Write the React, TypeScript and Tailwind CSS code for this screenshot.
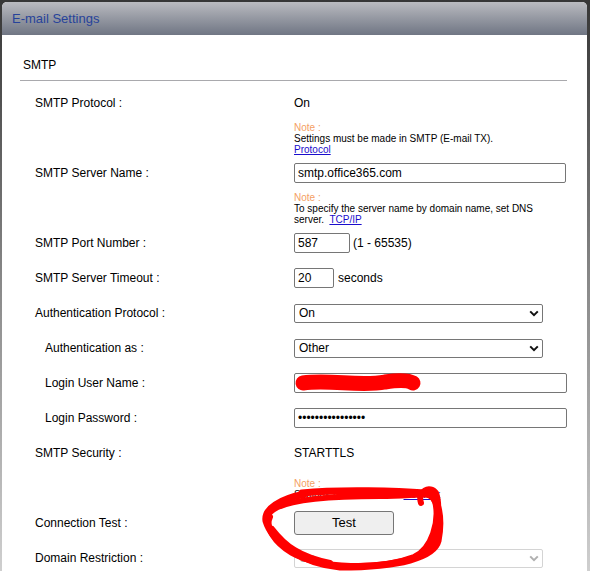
import React from "react";

const font = "font-['Liberation_Sans',Arial,Helvetica,sans-serif]";

function Chevron({ muted }: { muted?: boolean }) {
    return (
        <svg width="10" height="7" viewBox="0 0 10 7" className="shrink-0">
            <path
                d="M1.2 1.4 L5 5.2 L8.8 1.4"
                fill="none"
                stroke={muted ? "#b0b0b0" : "#111"}
                strokeWidth="2"
            />
        </svg>
    );
}

function Select({ value, disabled }: { value: string; disabled?: boolean }) {
    return (
        <div
            className={`flex h-[19px] w-[249px] items-center justify-between rounded-[2px] border pl-[4px] pr-[3px] text-[12px] ${
                disabled ? "border-[#d4d4d4] text-[#a8a8a8]" : "border-[#767676] text-black"
            }`}
        >
            <span>{value}</span>
            <Chevron muted={disabled} />
        </div>
    );
}

function TextBox({ value, width, password }: { value: string; width: string; password?: boolean }) {
    return (
        <input
            readOnly
            type={password ? "password" : "text"}
            value={value}
            className={`${width} h-[20px] rounded-[2px] border border-[#767676] bg-white pl-[3px] text-[12px] text-black outline-none`}
        />
    );
}

function Row({
    label,
    indent,
    className,
    children,
}: {
    label: string;
    indent?: boolean;
    className: string;
    children: React.ReactNode;
}) {
    return (
        <div className={`flex items-center ${className}`}>
            <div className={`w-[259px] shrink-0 text-[12px] text-black ${indent ? "pl-[10px]" : ""}`}>{label}</div>
            <div className="flex items-center">{children}</div>
        </div>
    );
}

function Note({ className, children }: { className: string; children: React.ReactNode }) {
    return (
        <div className={`ml-[259px] text-[10px] leading-[11px] text-black ${className}`}>
            <div className="text-[#f4a064]">Note :</div>
            {children}
        </div>
    );
}

export default function App() {
    return (
        <div className={`h-[571px] overflow-hidden bg-gradient-to-b from-[#363636] via-[#8a8a8a] to-[#cfcfcf] pl-[2px] pr-[3px] pt-[2px] ${font}`}>
            <div className="h-full overflow-hidden rounded-t-[5px] bg-white">
                {/* Header */}
                <div className="flex h-[33px] items-center bg-gradient-to-b from-[#babbc0] to-[#707684] pl-[10px] text-[13px] text-[#27439a]">
                    E-mail Settings
                </div>

                {/* Content */}
                <div className="pl-[33px]">
                    <div className="ml-[-12px] mt-[20px] text-[12px] leading-[20px] text-black">SMTP</div>
                    <div className="ml-[-15px] mt-[5px] h-px w-[547px] bg-[#a9a9ad]" />

                    <Row label="SMTP Protocol :" className="mt-[12px] h-[20px]">
                        <span className="text-[12px] text-black">On</span>
                    </Row>
                    <Note className="mt-[9px]">
                        <div>Settings must be made in SMTP (E-mail TX).</div>
                        <div>
                            <span className="text-[#1a0dcc] underline">Protocol</span>
                        </div>
                    </Note>

                    <Row label="SMTP Server Name :" className="mt-[8px] h-[20px]">
                        <TextBox value="smtp.office365.com" width="w-[272px]" />
                    </Row>
                    <Note className="mt-[9px]">
                        <div>To specify the server name by domain name, set DNS</div>
                        <div>
                            server.&nbsp; <span className="text-[#1a0dcc] underline">TCP/IP</span>
                        </div>
                    </Note>

                    <Row label="SMTP Port Number :" className="mt-[8px] h-[20px]">
                        <TextBox value="587" width="w-[56px]" />
                        <span className="ml-[3px] text-[12px] text-black">(1 - 65535)</span>
                    </Row>

                    <Row label="SMTP Server Timeout :" className="mt-[15px] h-[20px]">
                        <TextBox value="20" width="w-[40px]" />
                        <span className="ml-[4px] text-[12px] text-black">seconds</span>
                    </Row>

                    <Row label="Authentication Protocol :" className="mt-[15px] h-[20px]">
                        <Select value="On" />
                    </Row>

                    <Row label="Authentication as :" indent className="mt-[15px] h-[20px]">
                        <Select value="Other" />
                    </Row>

                    <Row label="Login User Name :" indent className="mt-[15px] h-[20px]">
                        <TextBox value="" width="w-[273px]" />
                    </Row>

                    <Row label="Login Password :" indent className="mt-[15px] h-[20px]">
                        <TextBox value="abcdefghijklmnop" width="w-[273px]" password />
                    </Row>

                    <Row label="SMTP Security :" className="mt-[15px] h-[20px]">
                        <span className="text-[12px] text-black">STARTTLS</span>
                    </Row>
                    <Note className="mt-[15px]">
                        <div>
                            Settings must be saved.{" "}
                            <span className="text-[#1a0dcc] underline">Network</span>
                        </div>
                    </Note>

                    <Row label="Connection Test :" className="mt-[11px] h-[24px]">
                        <button className="h-[24px] w-[100px] rounded-[3px] border border-[#767676] bg-[#efefef] text-[13px] text-black">
                            Test
                        </button>
                    </Row>

                    <Row label="Domain Restriction :" className="mt-[13px] h-[20px]">
                        <Select value="On" disabled />
                    </Row>
                </div>
            </div>

            {/* Red ink marks drawn over the screenshot */}
            <svg
                className="pointer-events-none absolute left-0 top-0"
                width="590"
                height="571"
                viewBox="0 0 590 571"
            >
                <g fill="none" stroke="#ff0000" strokeLinecap="round" strokeLinejoin="round">
                    <path
                        d="M303 383 C330 379, 360 387, 385 382 C398 380, 408 380, 413 383"
                        strokeWidth="15"
                    />
                    <path
                        d="M302 493 C340 489, 400 491, 425 493 C440 495, 442 521, 438 541 C434 557, 400 567, 340 567 C300 563, 272 541, 266 521 C264 509, 280 499, 305 494"
                        strokeWidth="7"
                    />
                    <path
                        d="M268 515 C276 501, 320 496, 380 496 C420 496, 430 490, 435 501 C440 521, 432 549, 414 557 C380 570, 320 569, 292 553 C274 542, 265 527, 270 517"
                        strokeWidth="6"
                    />
                    <path
                        d="M421 503 C417 491, 430 485, 436 493 C441 506, 437 531, 429 551"
                        strokeWidth="6"
                    />
                    <path d="M272 529 C285 546, 300 557, 330 563" strokeWidth="6" />
                </g>
            </svg>
        </div>
    );
}
